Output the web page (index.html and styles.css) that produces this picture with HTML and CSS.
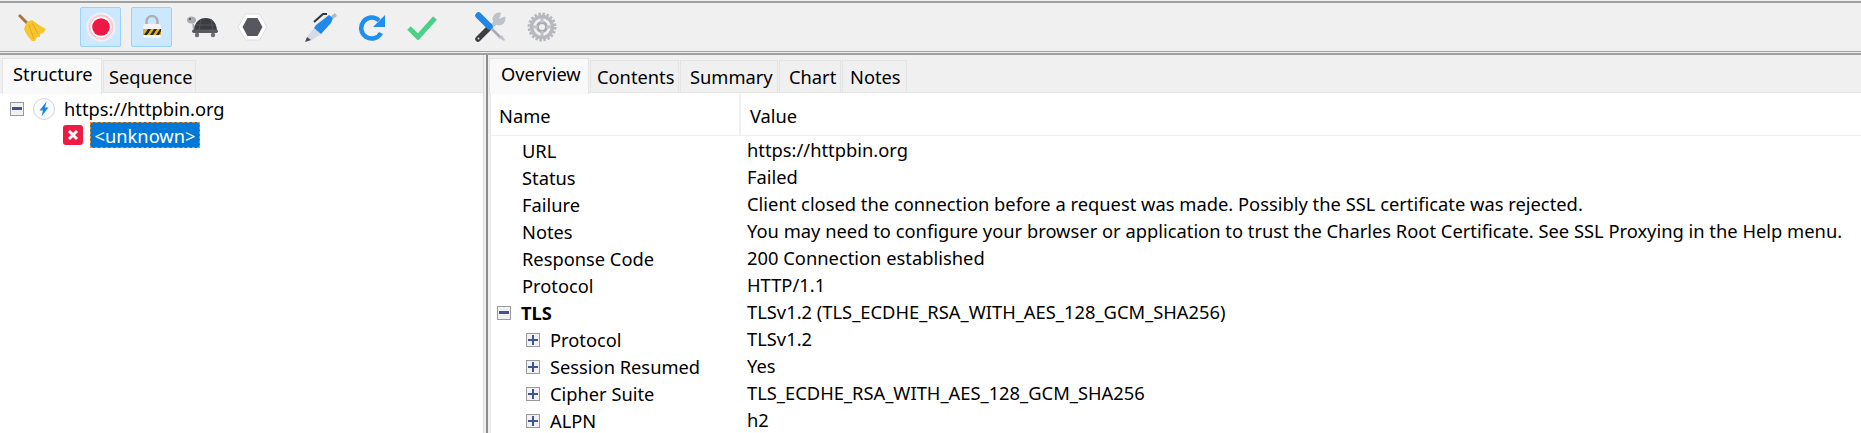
FILE: index.html
```html
<!DOCTYPE html>
<html lang="en">
<head>
<meta charset="utf-8">
<title>Charles</title>
<link rel="stylesheet" href="styles.css">
</head>
<body>
<header class="toolbar">
  <div class="tool broom"><svg width="30" height="30" viewBox="0 0 30 30"><path d="M1 3l9 9" stroke="#a9743c" stroke-width="3" fill="none"/><path d="M9 10l5-2q6 5 14 9l-2 3-1 1-3 1v3l-3 0-2 4h-3q-6-6-8-12q1-4 3-7z" fill="#f6c52f"/><path d="M11 13l5 14M14 11l6 11" stroke="#e6a91f" stroke-width="1" fill="none"/></svg></div>
  <div class="tool record active"><svg width="30" height="30" viewBox="0 0 30 30"><circle cx="15" cy="15" r="14.500" fill="#f1f1f5"/><circle cx="15" cy="15" r="12.500" fill="#fbc9d4"/><circle cx="15" cy="15" r="10.500" fill="#fff"/><circle cx="15" cy="15" r="8.800" fill="#ee1745"/></svg></div>
  <div class="tool lock active"><svg width="20" height="24" viewBox="0 0 20 24"><path d="M4.500 11V6.500a5.500 5.500 0 0 1 11 0V11" fill="none" stroke="#aeb0b7" stroke-width="2.500"/><rect x="1" y="9" width="18" height="14" rx="2" fill="#f4f4f6"/><rect x="1" y="14" width="18" height="6" fill="#e2b31f"/><path d="M2 20l4-6h3l-4 6zM8 20l4-6h3l-4 6zM14 20l4-6h1v2l-2 4z" fill="#26262c"/></svg></div>
  <div class="tool turtle"><svg width="32" height="24" viewBox="0 0 32 24"><ellipse cx="5.500" cy="5" rx="4.500" ry="3.500" fill="#a9acb2"/><circle cx="4" cy="4" r="1" fill="#444"/><path d="M6 7l5 7-4 1z" fill="#a9acb2"/><path d="M8 15C9 6 14 3 20 3s10 4 11 12z" fill="#3c3d42"/><path d="M15 4l-2 11M25 4l2 11M10 10h20" stroke="#55565c" fill="none"/><rect x="6" y="14.500" width="26" height="3.500" rx="1.700" fill="#5a5b60"/><circle cx="11" cy="20" r="2.200" fill="#6c6d72"/><circle cx="27" cy="20" r="2.200" fill="#6c6d72"/></svg></div>
  <div class="tool hex"><svg width="31" height="28" viewBox="0 0 31 28"><path d="M8.500 1h14l7.500 13-7.500 13h-14L1 14z" fill="#fff" stroke="#dcdde2"/><path d="M10.500 5h10l5 9-5 9h-10l-5-9z" fill="#56575f"/></svg></div>
  <div class="tool pen"><svg width="32" height="30" viewBox="0 0 32 30"><path d="M2 25l7-9 7 6-9 6-5 2z" fill="#d6dae6"/><path d="M0 30l2-5 4 3z" fill="#4a4b50"/><path d="M9 16l2-3 13-10 4 3-2 5-10 11z" fill="#2089ea"/><path d="M9 10l9-8 4 0" stroke="#34353a" stroke-width="2" fill="none"/><path d="M26 4l4-3 2 3-4 3z" fill="#b7b9c1"/></svg></div>
  <div class="tool refresh"><svg width="28" height="28" viewBox="0 0 28 28"><path d="M21 7.500A10.500 10.500 0 1 0 23 20" fill="none" stroke="#1e8fee" stroke-width="4.500"/><path d="M27 2v12H15z" fill="#1e8fee"/></svg></div>
  <div class="tool check"><svg width="30" height="26" viewBox="0 0 30 26"><path d="M2 14l9 9L28 4" fill="none" stroke="#4bd088" stroke-width="5"/></svg></div>
  <div class="tool tools"><svg width="31" height="30" viewBox="0 0 31 30"><path d="M15 15l11 11" stroke="#a9abb3" stroke-width="2.500"/><path d="M24 26l3-3 3 5-1 1z" fill="#c2c4cb"/><path d="M14 17l9-9" stroke="#c0c2c9" stroke-width="4.500"/><circle cx="24" cy="7" r="6.500" fill="#c0c2c9"/><path d="M24 7l3-8h4v5z" fill="#f0f0f0"/><path d="M3 27l10-10" stroke="#3d3e44" stroke-width="5.500" stroke-linecap="round"/><circle cx="3.500" cy="26.500" r="1" fill="#d5d5d8"/><path d="M3.500 3.500L14.500 14.500" stroke="#1f87e6" stroke-width="6.500" stroke-linecap="round"/></svg></div>
  <div class="tool gear"><svg width="30" height="30" viewBox="0 0 30 30"><circle cx="15" cy="15" r="13.200" fill="none" stroke="#b6b8be" stroke-width="2.500" stroke-dasharray="2.500 1.650"/><circle cx="15" cy="15" r="10.500" fill="none" stroke="#b6b8be" stroke-width="3.500"/><circle cx="15" cy="15" r="4.500" fill="none" stroke="#a8aab0" stroke-width="3"/><path d="M15 6v5M15 19v5M6 15h5M19 15h5" stroke="#c0c2c7" stroke-width="3"/></svg></div>
</header>
<main class="panes">
  <section class="left">
    <nav class="tabs">
      <span class="tab selected t-structure">Structure</span>
      <span class="tab t-sequence">Sequence</span>
    </nav>
    <div class="tree">
      <div class="host">
        <span class="box"><i class="minus"></i></span>
        <svg width="22" height="22" viewBox="0 0 22 22"><circle cx="11" cy="11" r="10.500" fill="#fafbfd" stroke="#d5d7dc"/><path d="M13.500 3.500l-7 9h3.500l-1.500 6 7-9h-3.500z" fill="#1c86e8"/></svg>
        <span>https://httpbin.org</span>
      </div>
      <div class="child">
        <svg class="erricon" width="20" height="20" viewBox="0 0 20 20"><rect width="20" height="20" rx="3" fill="#ec1c45"/><path d="M6 6l8 8M14 6l-8 8" stroke="#fff" stroke-width="3"/></svg>
        <span class="sel">&lt;unknown&gt;</span>
      </div>
    </div>
  </section>
  <section class="right">
    <nav class="tabs">
      <span class="tab selected t-overview">Overview</span>
      <span class="tab t-contents">Contents</span>
      <span class="tab t-summary">Summary</span>
      <span class="tab t-chart">Chart</span>
      <span class="tab t-notes">Notes</span>
    </nav>
    <div class="table">
      <div class="thead"><span class="cname">Name</span><span class="cvalue">Value</span></div>
      <div class="rows">
        <div class="row"><span class="name l1">URL</span><span class="val">https://httpbin.org</span></div>
        <div class="row"><span class="name l1">Status</span><span class="val">Failed</span></div>
        <div class="row"><span class="name l1">Failure</span><span class="val">Client closed the connection before a request was made. Possibly the SSL certificate was rejected.</span></div>
        <div class="row"><span class="name l1">Notes</span><span class="val">You may need to configure your browser or application to trust the Charles Root Certificate. See SSL Proxying in the Help menu.</span></div>
        <div class="row"><span class="name l1">Response Code</span><span class="val">200 Connection established</span></div>
        <div class="row"><span class="name l1">Protocol</span><span class="val">HTTP/1.1</span></div>
        <div class="row"><span class="name l0"><span class="box"><i class="minus"></i></span><b>TLS</b></span><span class="val">TLSv1.2 (TLS_ECDHE_RSA_WITH_AES_128_GCM_SHA256)</span></div>
        <div class="row"><span class="name l2"><span class="box plus"><i class="minus"></i><i class="vert"></i></span>Protocol</span><span class="val">TLSv1.2</span></div>
        <div class="row"><span class="name l2"><span class="box plus"><i class="minus"></i><i class="vert"></i></span>Session Resumed</span><span class="val">Yes</span></div>
        <div class="row"><span class="name l2"><span class="box plus"><i class="minus"></i><i class="vert"></i></span>Cipher Suite</span><span class="val">TLS_ECDHE_RSA_WITH_AES_128_GCM_SHA256</span></div>
        <div class="row"><span class="name l2"><span class="box plus"><i class="minus"></i><i class="vert"></i></span>ALPN</span><span class="val">h2</span></div>
      </div>
    </div>
  </section>
</main>
</body>
</html>
```
FILE: styles.css
```css
* { box-sizing: border-box; }
html, body { margin: 0; height: 100%; overflow: hidden; }
body {
  background: #f0f0f0;
  color: #000;
  font: 18.3px/24px "Noto Sans", "Open Sans", sans-serif;
  padding-top: 1px;
}
.toolbar {
  display: flex;
  align-items: center;
  height: 51px;
  border-top: 2px solid #a0a0a0;
  border-bottom: 1px solid #a0a0a0;
}
.tool { width: 41px; height: 40px; display: flex; align-items: center; justify-content: center; flex: none; }
.tool.active { background: #cce8ff; border: 1px solid #99d1ff; border-radius: 2px; }
.broom { margin-left: 12px; }
.record { margin-left: 27px; }
.lock { margin-left: 10px; }
.turtle { margin-left: 9px; }
.hex { margin-left: 10px; }
.pen { margin-left: 27px; }
.refresh { margin-left: 10px; }
.check { margin-left: 9px; }
.tools { margin-left: 28px; }
.gear { margin-left: 10px; }
.panes { display: flex; height: 380px; margin-top: 1px; border-top: 2px solid #a0a0a0; padding-top: 3px; }
.left { width: 484px; flex: none; border-right: 1px solid #dcdcdc; margin-top: -3px; padding-top: 3px; }
.right { flex: 1; min-width: 0; margin: -3px 0 0 2px; padding: 3px 0 0 1px; border-left: 2px solid #8c8c8c; }
.tabs { display: flex; height: 35px; align-items: flex-start; border-bottom: 1px solid #e6e6e6; }
.left .tabs { padding-left: 2px; }
.tab {
  height: 32px;
  margin-top: 2px;
  margin-right: 1px;
  padding-left: 7px;
  line-height: 32px;
  background: #f0f0f0;
  border: 1px solid #e4e4e4;
  border-bottom: 0;
  white-space: nowrap;
  flex: none;
}
.tab.selected { position: relative; height: 36px; margin-top: 0; background: #f9f9f9; padding-left: 11px; line-height: 30px; }
.t-structure { width: 100px; }
.tab.t-structure { padding-left: 10px; }
.t-sequence { width: 93px; padding-left: 5px; }
.t-overview { width: 100px; }
.t-contents { width: 89px; padding-left: 6px; }
.t-summary { width: 98px; padding-left: 9px; }
.t-chart { width: 62px; padding-left: 9px; }
.t-notes { width: 65px; padding-left: 7px; }
.tree { background: #fff; height: 340px; padding-top: 4px; }
.host { display: flex; align-items: center; height: 24px; padding-left: 10px; gap: 9px; }
.box {
  display: inline-block;
  position: relative;
  width: 14px;
  height: 14px;
  border: 1px solid #9a9a9a;
  background: #f1f1f4;
  flex: none;
}
.minus { position: absolute; left: 1px; top: 4px; width: 10px; height: 3px; background: #3f5591; }
.plus .minus { top: 5px; height: 2px; }
.vert { position: absolute; left: 5px; top: 1px; width: 2px; height: 10px; background: #3f5591; }
.child { display: flex; align-items: center; height: 27px; padding-left: 63px; gap: 7px; }
.erricon { margin-top: 1px; }
.sel {
  width: 110px;
  height: 26px;
  background: #0078d7;
  color: #fff;
  border: 1px dashed #f58a1f;
  line-height: 26px;
  text-align: center;
}
.table { background: #fff; height: 340px; margin-left: 1px; border-left: 1px solid #e8e8e8; }
.thead { display: flex; height: 43px; border-bottom: 1px solid #f0f0f0; }
.cname { width: 250px; padding-left: 8px; line-height: 46px; border-right: 2px solid #f0f0f0; }
.cvalue { padding-left: 9px; line-height: 46px; }
.rows { padding-top: 1px; }
.row { display: flex; height: 27px; align-items: center; white-space: nowrap; }
.name { width: 256px; flex: none; display: flex; align-items: center; }
.val { padding-bottom: 2px; font-size: 18.34px; }
.l1 { padding-left: 31px; }
.l0 { padding-left: 6px; gap: 10px; }
.l2 { padding-left: 35px; gap: 10px; }
```
